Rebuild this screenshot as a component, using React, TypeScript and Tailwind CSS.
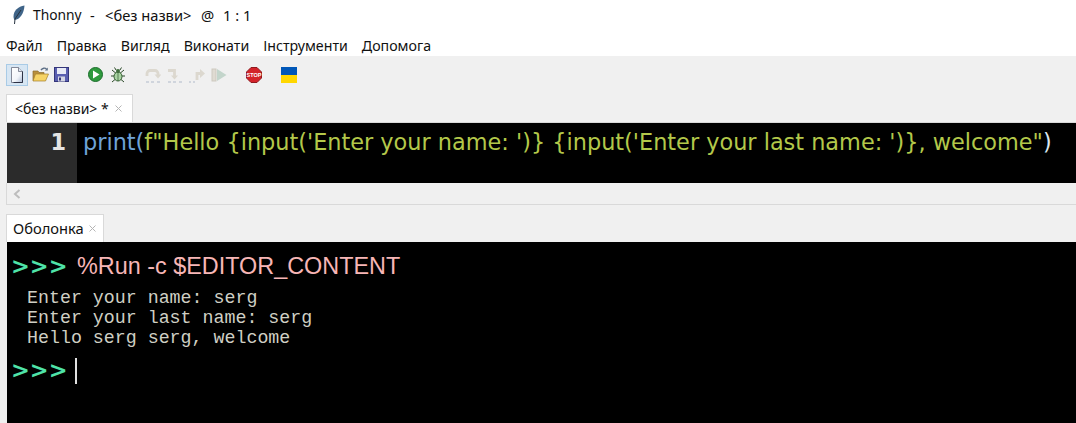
import { ReactNode } from "react";

const ui = "font-['Noto_Sans','Open_Sans',sans-serif]";

const NewIcon = () => (
  <svg width="16" height="16" viewBox="0 0 16 16" className="block">
    <defs>
      <linearGradient id="paper" x1="0" y1="0" x2="1" y2="1">
        <stop offset="0" stopColor="#ffffff" />
        <stop offset=".6" stopColor="#f2f5fa" />
        <stop offset="1" stopColor="#a9b8d2" />
      </linearGradient>
    </defs>
    <path d="M2.500 .5h7l4 4v11h-11z" fill="url(#paper)" stroke="#6a6f80" strokeWidth=".8" />
    <path d="M9.500 .5v4h4" fill="#dfe5ef" stroke="#6a6f80" strokeWidth=".8" />
    <path d="M13.500 4.500v11h-9" fill="none" stroke="#2d3245" strokeWidth="1" />
  </svg>
);

const OpenIcon = () => (
  <svg width="17" height="16" viewBox="0 0 17 16" className="block">
    <path d="M1 4h5l1 1.500h5v8H1z" fill="#b98f3c" stroke="#8a6a2b" strokeWidth=".7" />
    <path d="M3.500 7h13l-3 7H1z" fill="#f6d365" stroke="#a57f2d" strokeWidth=".7" />
    <path d="M9 3c1.500-2 4-2.500 5.500-1" fill="none" stroke="#5d6f86" strokeWidth="1.400" />
    <path d="M15.800 .5v3h-3z" fill="#5d6f86" />
  </svg>
);

const SaveIcon = () => (
  <svg width="15" height="15" viewBox="0 0 15 15" className="block">
    <rect x=".5" y=".5" width="14" height="14" fill="#5a5fb0" stroke="#34367a" />
    <rect x="3" y="1" width="9" height="6" fill="#e9ebf6" />
    <rect x="4" y="9.500" width="7" height="5" fill="#d5d7e4" />
    <rect x="5" y="10.500" width="2" height="3" fill="#34367a" />
  </svg>
);

const RunIcon = () => (
  <svg width="15" height="15" viewBox="0 0 15 15" className="block">
    <circle cx="7.500" cy="7.500" r="7" fill="#2f9a3e" stroke="#1c6e2c" />
    <path d="M5 3.500v8l6.500-4z" fill="#ffffff" />
  </svg>
);

const BugIcon = () => (
  <svg width="16" height="16" viewBox="0 0 16 16" className="block">
    <path
      d="M8 8L2 3M8 8L14 3M8 9H1M8 9h7M8 10l-6 5M8 10l6 5M6 3L4.500 .5M10 3l1.500-2.500"
      stroke="#2c4a2a"
      strokeWidth="1"
      fill="none"
    />
    <ellipse cx="8" cy="9.500" rx="4" ry="4.500" fill="#a9d3a2" stroke="#355f33" />
    <path d="M8 5.500v8.500" stroke="#355f33" strokeWidth=".7" />
    <circle cx="8" cy="4" r="2" fill="#3f6d3c" />
  </svg>
);

const StepOver = () => (
  <svg width="16" height="16" viewBox="0 0 16 16" className="block">
    <path d="M2 9V6.500a3 3 0 0 1 3-3h5a3 3 0 0 1 3 3V8" fill="none" stroke="#dcd8cf" strokeWidth="2.800" />
    <path d="M9.500 7.500h7l-3.500 4z" fill="#dcd8cf" />
    <path d="M1 15h3M6 15h3M12 15h3" stroke="#c5cbd6" strokeWidth="1.500" />
  </svg>
);

const StepInto = () => (
  <svg width="16" height="16" viewBox="0 0 16 16" className="block">
    <path d="M1 3.500h6.500V10" fill="none" stroke="#dcd8cf" strokeWidth="2.800" />
    <path d="M4 8.500h7l-3.500 4z" fill="#dcd8cf" />
    <path d="M1 15h3M6 15h3M12 15h3" stroke="#c5cbd6" strokeWidth="1.500" />
  </svg>
);

const StepOut = () => (
  <svg width="16" height="16" viewBox="0 0 16 16" className="block">
    <path d="M8 13V6.500h4" fill="none" stroke="#dcd8cf" strokeWidth="2.800" />
    <path d="M11 2v9l5-4.500z" fill="#dcd8cf" />
    <path d="M0 15h2M4 15h2" stroke="#c5cbd6" strokeWidth="1.500" />
  </svg>
);

const Resume = () => (
  <svg width="16" height="14" viewBox="0 0 16 14" className="block">
    <rect x="1" y="1" width="4" height="12" fill="#dfdbd2" stroke="#cdc9bf" />
    <path d="M6 1l9.500 6L6 13z" fill="#c3d5cb" />
  </svg>
);

const StopIcon = () => (
  <svg width="16" height="16" viewBox="0 0 16 16" className="block">
    <path d="M5 .5h6L15.500 5v6L11 15.500H5L.5 11V5z" fill="#d3232a" stroke="#8e1a1e" />
    <text x="8" y="10" textAnchor="middle" fontSize="5.500" fontWeight="700" fill="#fff" fontFamily="Liberation Sans">
      STOP
    </text>
  </svg>
);

const Flag = () => (
  <div className="flex flex-col w-4 h-4">
    <div className="h-2 bg-[#0057b8]" />
    <div className="h-2 bg-[#ffd700]" />
  </div>
);

const Tab = ({ children, width, size }: { children: ReactNode; width: string; size: string }) => (
  <div className={`${width} ${size} h-[28px] bg-white border-t border-r border-l border-[#d9d9d9] flex items-center text-[#111] ${ui}`}>
    {children}
  </div>
);

const CloseX = () => (
  <svg width="7" height="7" viewBox="0 0 7 7" className="block">
    <path d="M.5 .5l6 6M6.500 .5l-6 6" stroke="#b5b5b5" strokeWidth="1" />
  </svg>
);

export default function App() {
  const menu = ["Файл", "Правка", "Вигляд", "Виконати", "Інструменти", "Допомога"];

  return (
    <div className={`w-[1076px] h-[423px] overflow-hidden flex flex-col bg-[#f0f0f0] ${ui}`}>
      <div className="h-[30px] bg-white flex items-center pl-[12px] text-[14.700px] text-[#111]">
        <svg width="14" height="20" viewBox="0 0 14 20" className="block">
          <path d="M12.500 .5C6 1.500 1.500 6 1.500 11.500c0 1.500 .5 2.500 1 3.500C8 14.500 12 8.500 12.500 .5z" fill="#3f6488" />
          <path d="M9 5L3 14 2.500 19" stroke="#26323f" strokeWidth="1" fill="none" />
        </svg>
        <span className="ml-[7px] w-[57px] text-[13.800px]">Thonny</span>
        <span className="w-[15px]">-</span>
        <span className="w-[96px]">&lt;без назви&gt;</span>
        <span className="w-[22px]">@</span>
        <span>1 : 1</span>
      </div>

      <div className="h-[26px] bg-white flex items-center gap-[14px] pl-[6px] pt-[6px] text-[14.200px] text-[#111]">
        {menu.map((m) => (
          <span key={m}>{m}</span>
        ))}
      </div>

      <div className="h-[37px] flex items-center pl-[6px]">
        <div className="w-[22px] h-[22px] bg-[#d7e6f3] border border-[#a9cbe6] flex items-center justify-center">
          <NewIcon />
        </div>
        <div className="ml-[2px] w-[20px] flex justify-center">
          <OpenIcon />
        </div>
        <div className="ml-[1px] w-[20px] flex justify-center">
          <SaveIcon />
        </div>
        <div className="ml-[14px] w-[20px] flex justify-center">
          <RunIcon />
        </div>
        <div className="ml-[3px] w-[20px] flex justify-center">
          <BugIcon />
        </div>
        <div className="ml-[17px] flex items-center gap-[6px]">
          <StepOver />
          <StepInto />
          <StepOut />
          <Resume />
        </div>
        <div className="ml-[19px] pt-[1px]">
          <StopIcon />
        </div>
        <div className="ml-[19px] pt-[1px]">
          <Flag />
        </div>
      </div>

      <div className="pl-[6px] h-[29px] flex items-end">
        <Tab width="w-[127px]" size="text-[14px]">
          <span className="ml-[8px] whitespace-pre">&lt;без назви&gt; *</span>
          <span className="ml-[6px]">
            <CloseX />
          </span>
        </Tab>
      </div>

      <div className="ml-[7px] h-[61px] bg-black flex border-t border-[#d9d9d9]">
        <div className="w-[70px] bg-[#2b2b2b] text-right pr-[11px] pt-[5px] text-[22.400px] leading-[28px] font-bold text-[#e4e4e4] font-['DejaVu_Sans',sans-serif]">
          1
        </div>
        <div className="pl-[6px] pt-[5px] text-[22.400px] leading-[28px] whitespace-pre text-[#b3c84a] font-['DejaVu_Sans',sans-serif]">
          <span className="text-[#6fa3d8]">print(</span>
          f"Hello {"{"}input('Enter your name: ')
          {"}"} {"{"}input('Enter your last name: ')
          {"}"}, welcome"
          <span className="text-[#d9e6f2]">)</span>
        </div>
      </div>

      <div className="ml-[6px] h-[22px] border-b border-l border-[#d9d9d9] flex items-center pl-[6px]">
        <svg width="8" height="10" viewBox="0 0 8 10" className="block">
          <path d="M6.500 1L2 5l4.500 4" fill="none" stroke="#bdbdbd" strokeWidth="2" />
        </svg>
      </div>

      <div className="pl-[6px] h-[37px] flex items-end">
        <Tab width="w-[98px]" size="text-[14.700px]">
          <span className="ml-[6px]">Оболонка</span>
          <span className="ml-[5px]">
            <CloseX />
          </span>
        </Tab>
      </div>

      <div className="ml-[7px] flex-1 bg-black pl-[6px] pt-[9px]">
        <div className="flex items-center h-[30px] pt-[2px] font-['Liberation_Sans',sans-serif]">
          <span className="-ml-[2px] w-[66px] text-[#4fe3a8] font-['DejaVu_Sans',sans-serif] text-[22.500px] font-bold">&gt;&gt;&gt;</span>
          <span className="text-[23.400px] text-[#f7b6b6]">%Run -c $EDITOR_CONTENT</span>
        </div>
        <div className="mt-[7px] pl-[14px] text-[18.300px] leading-[20px] whitespace-pre text-[#cfcfc4] font-['Liberation_Mono',monospace]">
          <div>Enter your name: serg</div>
          <div>Enter your last name: serg</div>
          <div>Hello serg serg, welcome</div>
        </div>
        <div className="mt-[8px] flex items-center h-[30px]">
          <span className="-ml-[2px] w-[64px] text-[#4fe3a8] font-['DejaVu_Sans',sans-serif] text-[22.500px] font-bold">&gt;&gt;&gt;</span>
          <span className="w-[2px] h-[26px] bg-[#e0e0e0]" />
        </div>
      </div>
    </div>
  );
}
